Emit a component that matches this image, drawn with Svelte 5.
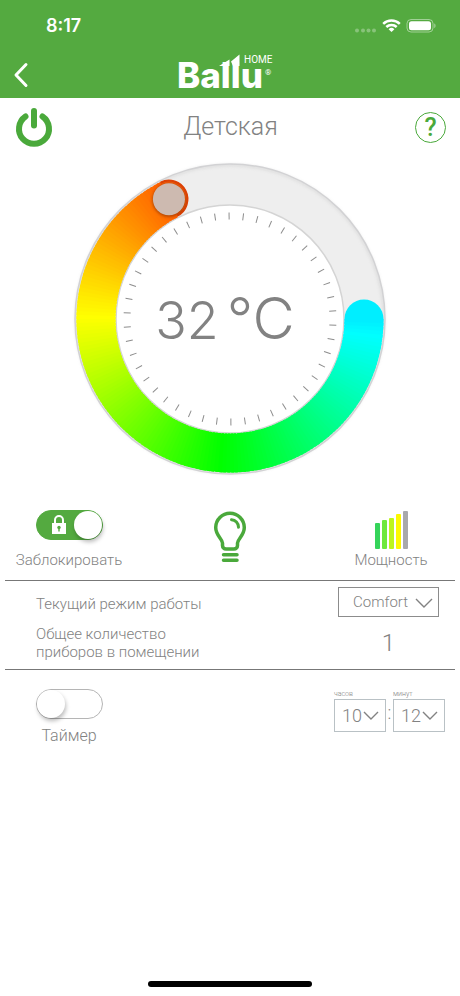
<script>
  const START = 90;
  const MIN = 5;
  const MAX = 35;

  let temperature = $state(32);
  let locked = $state(true);
  let timer = $state(false);
  let mode = $state('Comfort');
  let hours = $state('10');
  let minutes = $state('12');

  const angle = $derived(START + ((temperature - MIN) / (MAX - MIN)) * 270);

  function point(deg, r) {
    const a = (deg * Math.PI) / 180;
    return [160 + r * Math.sin(a), 160 - r * Math.cos(a)];
  }

  function arc(from, to, r) {
    const [x1, y1] = point(from, r);
    const [x2, y2] = point(to, r);
    return `M${x1} ${y1}A${r} ${r} 0 0 1 ${x2} ${y2}`;
  }

  const segments = $derived(
    Array.from({ length: Math.round((angle - START) / 1.5) }, (_, i) => {
      const a = START + i * 1.5;
      const hue = a < 270 ? 184 - ((a - 90) / 90) * 62 : 60 - ((a - 270) / 63) * 38;
      return { d: arc(a, Math.min(a + 2.5, angle), 134), color: `hsl(${hue} 100% 50%)` };
    })
  );

  const ticks = Array.from({ length: 46 }, (_, i) => (i * 360) / 46 - 0.5);
  const knob = $derived(point(angle, 134.5));
  const rim = $derived.by(() => {
    const [x1, y1] = point(angle, 153);
    const [x2, y2] = point(angle, 116);
    return `M${x1} ${y1}A18.500 18.500 0 0 1 ${x2} ${y2}`;
  });

  const bars = [
    { h: 26, c: '#35d45a' },
    { h: 29, c: '#6fe83c' },
    { h: 31, c: '#bdf51c' },
    { h: 35, c: '#fdf900' },
    { h: 38, c: '#a9a9ab' }
  ];
</script>

<div class="app">
  <header>
    <div class="status">
      <span class="time">8:17</span>
      <svg class="signals" width="84" height="16" viewBox="0 0 84 16" aria-hidden="true">
        <g fill="#fff" opacity=".3">
          <circle cx="5" cy="12.500" r="2" /><circle cx="11" cy="12.500" r="2" />
          <circle cx="16.500" cy="12.500" r="2" /><circle cx="22" cy="12.500" r="2" />
        </g>
        <g fill="none" stroke="#fff" stroke-width="2.500">
          <path d="M31.200 5.800a12 12 0 0 1 16.600 0" />
          <path d="M34.300 9a7.500 7.500 0 0 1 10.400 0" />
        </g>
        <path d="M36.600 11.200a4.200 4.200 0 0 1 5.800 0L39.500 14z" fill="#fff" />
        <rect x="55" y="1.500" width="26" height="12.500" rx="4" fill="none" stroke="#fff" opacity=".45" />
        <rect x="57" y="3.200" width="22" height="9" rx="2.500" fill="#fff" />
        <path d="M82.300 5.500v4.500c1.600-.6 1.600-3.900 0-4.500z" fill="#fff" opacity=".5" />
      </svg>
    </div>
    <nav>
      <button class="back" aria-label="Назад">
        <svg width="16" height="26" viewBox="0 0 16 26"><path d="M13 2.500 3 13 13 23.500" fill="none" stroke="#fff" stroke-width="3" stroke-linecap="round" stroke-linejoin="round" /></svg>
      </button>
      <svg class="logo" width="106" height="38" viewBox="0 0 106 38">
        <text x="0" y="36" class="brand">Ballu</text>
        <path d="M42 14 52.500 7.500V14zM54 9.500 62.500 2.500V14H56z" fill="#fff" />
        <text x="67" y="11" class="home">HOME</text>
        <text x="88" y="23" class="reg">®</text>
      </svg>
      <span class="side"></span>
    </nav>
  </header>

  <main>
    <div class="title">
      <button aria-label="Питание">
        <svg width="38" height="40" viewBox="0 0 38 40"><g fill="none" stroke="#4aa93b" stroke-width="6" stroke-linecap="round"><path d="M10.500 9.500a15 15 0 1 0 17 0" /><path d="M19 4v14.500" /></g></svg>
      </button>
      <h1>Детская</h1>
      <button class="help" aria-label="Справка">?</button>
    </div>

    <div class="dial">
      <svg width="320" height="320" viewBox="0 0 320 320" aria-hidden="true">
        <defs>
          <filter id="soft" x="-30%" y="-30%" width="160%" height="160%"><feGaussianBlur stdDeviation="1.500" /></filter>
        </defs>
        <circle cx="160" cy="160" r="134.500" fill="none" stroke="#eee" stroke-width="41" />
        <circle cx="160" cy="160" r="154" fill="none" stroke="#c4c4c4" stroke-width="2" opacity=".5" filter="url(#soft)" />
        <circle cx="160" cy="160" r="155" fill="none" stroke="#d2d2d4" stroke-width="1.500" />
        <circle cx="160" cy="160" r="114" fill="none" stroke="#d4d4d4" stroke-width="1.500" />
        <circle cx={point(START, 134)[0]} cy="160" r="19.500" fill="hsl(184 100% 50%)" />
        <circle cx={knob[0]} cy={knob[1]} r="19" fill="#f25a08" />
        {#each segments as s}
          <path d={s.d} fill="none" stroke={s.color} stroke-width="39" />
        {/each}
        <path d={rim} fill="none" stroke="#dd4205" stroke-width="2" />
        <circle cx={knob[0]} cy={knob[1] + 1} r="16.500" fill="#7a2a00" opacity=".6" filter="url(#soft)" />
        <circle cx={knob[0]} cy={knob[1]} r="16" fill="#cdbab0" />
        {#each ticks as t}
          <path d="M160 53.500v7" transform="rotate({t} 160 160)" stroke="#8c8c8c" />
        {/each}
      </svg>
      <p class="reading"><span class="value">{temperature}</span><span class="unit">°C</span></p>
      <input type="range" aria-label="Температура" min={MIN} max={MAX} bind:value={temperature} />
    </div>

    <section class="controls">
      <label class="cell">
        <span class="switch" class:on={locked}>
          <input type="checkbox" bind:checked={locked} />
          {#if locked}
            <svg width="16" height="22" viewBox="0 0 16 22"><path d="M4 10V6a4 4 0 0 1 8 0v4" fill="none" stroke="#fff" stroke-width="2" /><path d="M1 9h14v11H1z" fill="#fff" /><circle cx="8" cy="13.500" r="1.700" fill="#54aa40" /><path d="M7.300 14h1.400v3.500H7.300z" fill="#54aa40" /></svg>
          {/if}
          <span class="thumb"></span>
        </span>
        <span>Заблокировать</span>
      </label>
      <button class="cell" aria-label="Подсветка">
        <svg width="36" height="54" viewBox="0 0 36 54" fill="none" stroke="#4aa93b" stroke-linecap="round" stroke-linejoin="round">
          <path stroke-width="3.500" d="M10.500 35.500V33c0-4-6.800-7.500-6.800-15.500a14.300 14.300 0 0 1 28.600 0c0 8-6.800 11.500-6.800 15.500v2.500a3.500 3.500 0 0 1-3.500 3.500h-8a3.500 3.500 0 0 1-3.500-3.500z" />
          <path stroke-width="3" d="M19.500 9.700a7.500 7.500 0 0 1 7 7.500" />
          <path stroke-width="3.500" d="M11.500 44.800h13.500M11.500 50.300h13.500" />
        </svg>
      </button>
      <button class="cell">
        <span class="bars">
          {#each bars as b}<i style="height: {b.h}px; background: {b.c}"></i>{/each}
        </span>
        <span>Мощность</span>
      </button>
    </section>

    <section class="info">
      <div class="row">
        <label for="mode">Текущий режим работы</label>
        <span class="select wide">
          <select id="mode" bind:value={mode}><option>Comfort</option><option>Eco</option></select>
          <svg width="18" height="10" viewBox="0 0 18 10"><path d="M1 1l8 8 8-8" /></svg>
        </span>
      </div>
      <div class="row">
        <span>Общее количество<br />приборов в помещении</span>
        <span class="count">1</span>
      </div>
    </section>

    <section class="timer">
      <label class="cell">
        <span class="switch" class:on={timer}>
          <input type="checkbox" bind:checked={timer} />
          <span class="thumb"></span>
        </span>
        <span class="name">Таймер</span>
      </label>
      <div class="clock">
        <label>
          <span class="caption">часов</span>
          <span class="select">
            <select bind:value={hours}><option>10</option><option>11</option></select>
            <svg width="16" height="10" viewBox="0 0 16 10"><path d="M1 1l7 7 7-7" /></svg>
          </span>
        </label>
        <span class="colon">:</span>
        <label>
          <span class="caption">минут</span>
          <span class="select">
            <select bind:value={minutes}><option>12</option><option>13</option></select>
            <svg width="16" height="10" viewBox="0 0 16 10"><path d="M1 1l7 7 7-7" /></svg>
          </span>
        </label>
      </div>
    </section>
  </main>
  <div class="indicator"></div>
</div>

<style>
  :global(body) { background: #fff; }
  .app {
    min-height: 100vh;
    display: flex;
    flex-direction: column;
    font: 300 15px/18px Roboto, "Liberation Sans", sans-serif;
    color: #828282;
  }
  button {
    border: 0;
    padding: 0;
    background: none;
    font: inherit;
    color: inherit;
    cursor: pointer;
  }
  svg { display: block; }
  header { background: #54aa40; color: #fff; }
  .status {
    display: flex;
    justify-content: space-between;
    align-items: center;
    height: 51px;
    padding: 0 24px 0 46px;
  }
  .time { font: 600 18px/20px Inter, sans-serif; }
  nav {
    display: flex;
    justify-content: space-between;
    height: 47px;
    padding: 0 13px;
  }
  .back, .side { width: 36px; }
  .logo { margin-top: 1px; overflow: visible; }
  .brand { font: 800 35px Inter, sans-serif; fill: #fff; }
  .home { font: 400 10px Roboto, sans-serif; fill: #fff; }
  .reg { font: 400 8px Roboto, sans-serif; fill: #fff; }
  .title {
    display: grid;
    grid-template-columns: 38px 1fr 38px;
    align-items: center;
    height: 58px;
    padding: 0 14px 0 15px;
  }
  h1 {
    margin: 0;
    font-size: 25px;
    line-height: 32px;
    font-weight: 300;
    text-align: center;
  }
  .help {
    justify-self: end;
    width: 31px;
    height: 31px;
    border: 1px solid #4aa93b;
    border-radius: 50%;
    color: #4aa93b;
    font-size: 25px;
    font-weight: 500;
    line-height: 29px;
  }
  .dial {
    display: grid;
    place-items: center;
    margin-top: 3px;
  }
  .dial > * { grid-area: 1 / 1; }
  .dial input { width: 320px; height: 320px; margin: 0; opacity: 0; }
  .reading {
    display: flex;
    align-items: baseline;
    gap: 8px;
    margin: 0;
    padding-right: 10px;
    font-family: Inter, sans-serif;
    line-height: 72px;
  }
  .value { font-size: 52px; }
  .unit { font-size: 58px; }
  .controls {
    display: flex;
    justify-content: space-between;
    align-items: flex-start;
    margin: 0 5px;
    padding: 31px 10px 11px;
    border-bottom: 1px solid #777;
  }
  .cell {
    display: flex;
    flex-direction: column;
    align-items: center;
    width: 108px;
    white-space: nowrap;
  }
  .controls .cell { gap: 11px; }
  .switch {
    display: flex;
    align-items: center;
    position: relative;
    box-sizing: border-box;
    width: 67px;
    height: 30px;
    border: 1px solid #b5b5b5;
    border-radius: 15px;
  }
  .switch.on { background: #54aa40; border-color: #54aa40; padding-left: 14px; }
  .switch input { position: absolute; inset: 0; margin: 0; opacity: 0; }
  .thumb {
    width: 28px;
    height: 28px;
    border-radius: 50%;
    background: #fff;
    box-shadow: 1px 3px 4px #0004;
  }
  .on .thumb { margin-left: auto; }
  .bars { display: flex; align-items: flex-end; gap: 2px; height: 39px; }
  .bars i { width: 5px; border-radius: 1px; }
  .controls .cell:last-child { gap: 2px; }
  .info {
    display: flex;
    flex-direction: column;
    gap: 8px;
    margin: 0 5px;
    padding: 6px 16px 8px 31px;
    border-bottom: 1px solid #777;
  }
  .row { display: flex; justify-content: space-between; align-items: center; }
  .row label { padding-top: 4px; }
  .count { width: 101px; text-align: center; font-size: 24px; }
  .select { position: relative; display: block; width: 52px; height: 33px; }
  .select select {
    appearance: none;
    box-sizing: border-box;
    width: 100%;
    height: 100%;
    padding: 0 0 0 7px;
    border: 1px solid #b9c1c5;
    border-radius: 0;
    background: none;
    font: inherit;
    font-size: 18px;
    color: inherit;
  }
  .select svg {
    position: absolute;
    right: 7px;
    top: 12px;
    fill: none;
    stroke: #828282;
    stroke-width: 1.4;
    pointer-events: none;
  }
  .wide { width: 101px; height: 30px; }
  .wide select { padding-left: 14px; border-color: #8c8c8c; font-size: 15px; }
  .wide svg { right: 6px; top: 11px; }
  .timer {
    display: flex;
    justify-content: space-between;
    padding: 19px 15px;
  }
  .timer .cell { gap: 8px; }
  .name { font-size: 16px; }
  .clock { display: flex; }
  .caption { display: block; font-size: 7px; line-height: 10px; }
  .colon { width: 7px; padding-top: 15px; text-align: center; font-size: 18px; }
  .indicator {
    width: 164px;
    height: 6px;
    margin: auto auto 9px;
    border-radius: 3px;
    background: #000;
  }
</style>
